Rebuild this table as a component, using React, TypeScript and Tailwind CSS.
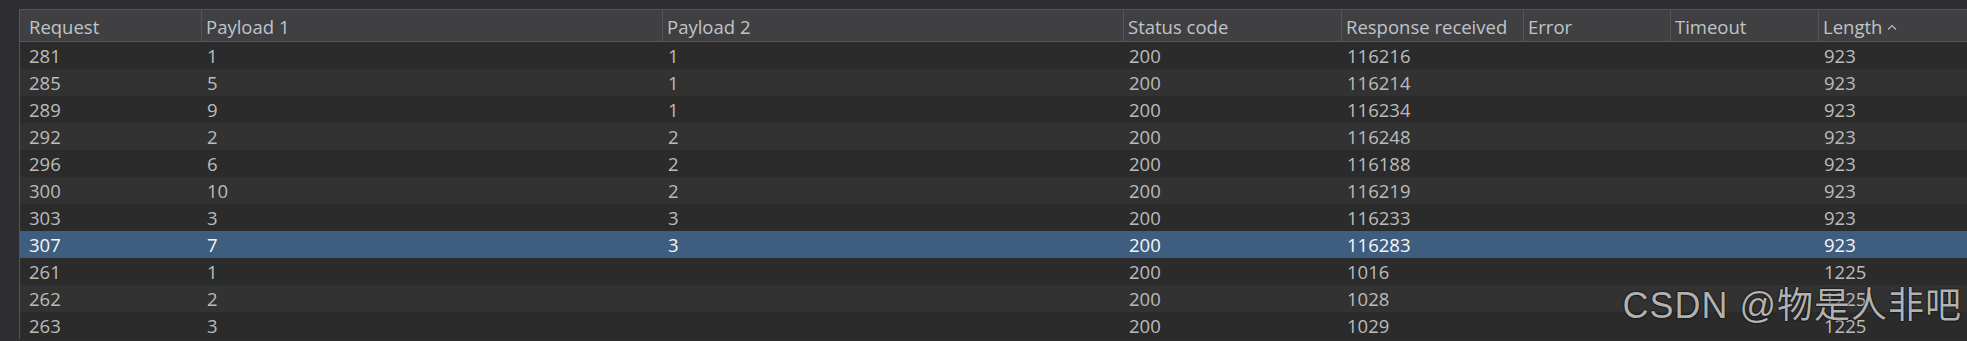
import React from "react";

type Row = [string, string, string, string, string, string, string, string];

const rows: Row[] = [
  ["281", "1", "1", "200", "116216", "", "", "923"],
  ["285", "5", "1", "200", "116214", "", "", "923"],
  ["289", "9", "1", "200", "116234", "", "", "923"],
  ["292", "2", "2", "200", "116248", "", "", "923"],
  ["296", "6", "2", "200", "116188", "", "", "923"],
  ["300", "10", "2", "200", "116219", "", "", "923"],
  ["303", "3", "3", "200", "116233", "", "", "923"],
  ["307", "7", "3", "200", "116283", "", "", "923"],
  ["261", "1", "", "200", "1016", "", "", "1225"],
  ["262", "2", "", "200", "1028", "", "", "1225"],
  ["263", "3", "", "200", "1029", "", "", "1225"],
];

const headers = [
  "Request",
  "Payload 1",
  "Payload 2",
  "Status code",
  "Response received",
  "Error",
  "Timeout",
  "Length",
];

const SELECTED = 7;

const cols =
  "grid grid-cols-[182px_461px_461px_218px_182px_147px_148px_1fr]";

function SortUp() {
  return (
    <svg width="10" height="6" viewBox="0 0 10 6" className="ml-[5px] mt-[1px]">
      <path d="M1 5.5 L5 1.5 L9 5.5" fill="none" stroke="#b9bec4" strokeWidth="1.1" />
    </svg>
  );
}

export default function App() {
  return (
    <div
      className="relative w-[1967px] h-[341px] overflow-hidden bg-[#2e2e30] pt-[9px] pl-[19px] text-[18.5px]"
      style={{ fontFamily: '"Open Sans", "Noto Sans", sans-serif' }}
    >
      <div className="border-l border-t border-[#555557]">
        <div className={`${cols} bg-[#404042] border-b border-[#58585a]`}>
          {headers.map((h, i) => (
            <div
              key={h}
              className={`flex items-center h-[31px] pt-[2px] text-[#bfc4c9] ${
                i === 0 ? "pl-[9px]" : "pl-[4px]"
              } ${i < headers.length - 1 ? "border-r border-[#555557]" : ""}`}
            >
              {h}
              {h === "Length" && <SortUp />}
            </div>
          ))}
        </div>

        {rows.map((r, idx) => {
          const bg =
            idx === SELECTED
              ? "bg-[#3f5e7f] text-[#f4f6f8]"
              : idx % 2 === 0
              ? "bg-[#2b2b2b] text-[#bbbbbb]"
              : "bg-[#323232] text-[#bbbbbb]";
          return (
            <div key={r[0]} className={`${cols} ${bg} h-[27px]`}>
              {r.map((c, i) => (
                <div
                  key={i}
                  className={`flex items-center h-[27px] ${i === 0 ? "pl-[9px]" : "pl-[5px]"}`}
                >
                  {c}
                </div>
              ))}
            </div>
          );
        })}
      </div>

      {/* watermark over the table */}
      <div
        className="absolute right-[5px] bottom-[17px] text-[36px] leading-none text-[#d2d2d2]/85 tracking-[1px] [text-shadow:0_0_2px_#000,0_0_1px_#000]"
        style={{ fontFamily: '"Liberation Sans", "Noto Sans CJK SC", sans-serif' }}
      >
        CSDN @物是人非吧
      </div>
    </div>
  );
}
